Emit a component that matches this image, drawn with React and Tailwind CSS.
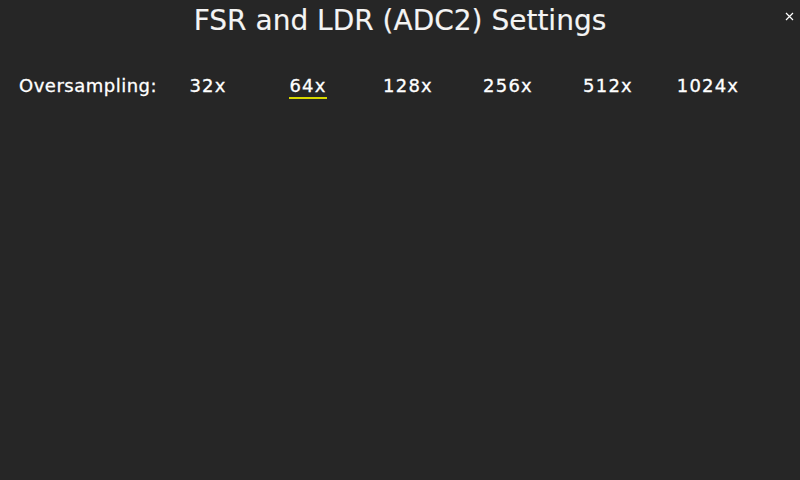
import React from "react";

const opts = ["32x", "64x", "128x", "256x", "512x", "1024x"];

export default function App() {
  return (
    <div
      className="relative w-[800px] h-[480px] bg-[#262626] text-white overflow-hidden"
      style={{ fontFamily: '"DejaVu Sans", sans-serif' }}
    >
      <div className="absolute right-[6px] top-[12px] w-[9px] h-[9px]">
        <svg width="9" height="9" viewBox="0 0 9 9">
          <path d="M1 1 L8 8 M8 1 L1 8" stroke="#fff" strokeWidth="1.2" />
        </svg>
      </div>
      <div
        className="pt-[4px] text-center text-[28px] leading-[34px] text-[#f4f4f4]"
        style={{ WebkitTextStroke: "0.15px currentColor" }}
      >
        FSR and LDR (ADC2) Settings
      </div>
      <div
        className="flex items-start mt-[37px]"
        style={{ WebkitTextStroke: "0.3px currentColor" }}
      >
        <div className="pl-[19px] w-[158px] text-[18px] leading-[22px] tracking-[0.5px]">
          Oversampling:
        </div>
        {opts.map((o, i) => (
          <div key={o} className="w-[100px] flex justify-center">
            <div className="flex flex-col items-center">
              <span className="text-[18px] leading-[22px] tracking-[1.2px]">{o}</span>
              {i === 1 && <div className="h-[1.5px] w-full bg-[#d8d800]" />}
            </div>
          </div>
        ))}
      </div>
    </div>
  );
}
